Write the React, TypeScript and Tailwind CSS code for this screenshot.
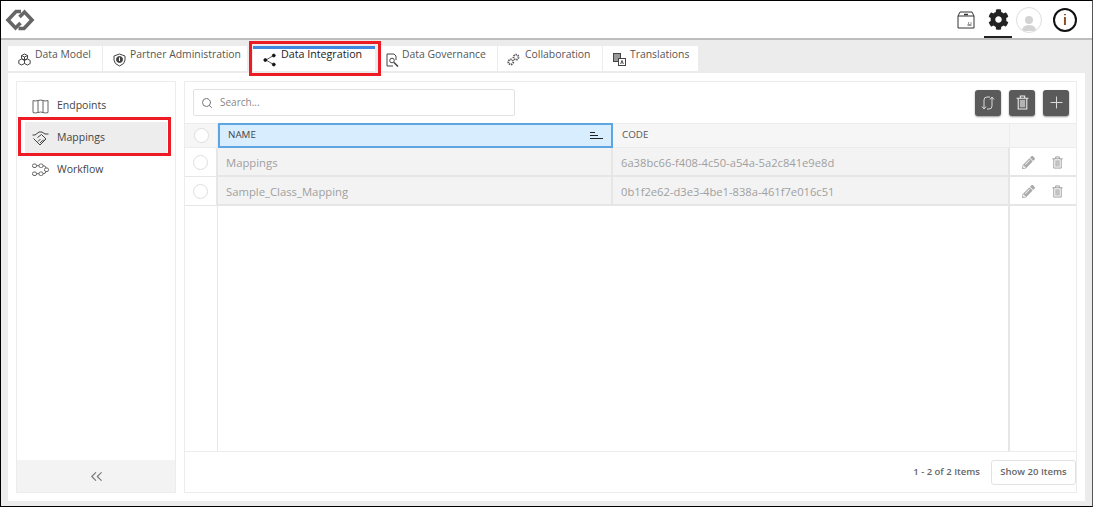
import { ChevronsLeft, Plus, Search } from "lucide-react";
import { FaCog, FaPencilAlt } from "react-icons/fa";
import type { ReactNode } from "react";

function Logo() {
  return (
    <svg width="30" height="22" viewBox="0 0 30 22" fill="none" stroke="#666" strokeWidth="3.6">
      <path d="M16 2.5 H11 L3 11 L10.5 19 L15.5 14" />
      <path d="M13.5 19.5 H19 L27 11 L19.5 3 L14.5 8" />
    </svg>
  );
}

function TrashIcon({ size = 14, color = "#999" }: { size?: number; color?: string }) {
  return (
    <svg width={size} height={size} viewBox="0 0 14 14" fill="none" stroke={color} strokeWidth="1">
      <path d="M1.5 3 H12.5 M5 3 V1 H9 V3" />
      <path d="M3 3 V13 H11 V3" />
      <rect x="4.5" y="4.5" width="5" height="7" fill={color} stroke="none" opacity="0.6" />
    </svg>
  );
}

function RefreshIcon() {
  return (
    <svg width="14" height="16" viewBox="0 0 14 16" fill="none" stroke="#d8d8d8" strokeWidth="1">
      <path d="M3 14 V5 Q3 2 6 2 H9" />
      <path d="M1 11.5 L3 14 L5 11.5" />
      <path d="M11 2 V11 Q11 14 8 14 H6" />
      <path d="M9 4.5 L11 2 L13 4.5" />
    </svg>
  );
}

function ModelIcon() {
  return (
    <svg width="13" height="13" viewBox="0 0 13 13" fill="none" stroke="#444" strokeWidth="1">
      <path d="M6.5 1 L9.5 2.5 V5.5 L6.5 7 L3.5 5.5 V2.5 Z" />
      <path d="M3.5 2.5 L6.5 4 L9.5 2.5 M6.5 4 V7" />
      <path d="M3.5 6 L6.5 7.5 V10.5 L3.5 12 L0.8 10.5 V7.5 Z" />
      <path d="M9.5 6 L12.2 7.5 V10.5 L9.5 12 L6.5 10.5 V7.5 Z" />
    </svg>
  );
}

function ShieldIcon() {
  return (
    <svg width="13" height="14" viewBox="0 0 13 14" fill="none" stroke="#444" strokeWidth="1">
      <path d="M6.5 1 L12 3 V7 Q12 11 6.5 13 Q1 11 1 7 V3 Z" />
      <circle cx="6.5" cy="6.5" r="3" fill="#444" />
      <path d="M6.5 4.5 V8" stroke="#fff" />
    </svg>
  );
}

function ShareIcon() {
  return (
    <svg width="14" height="14" viewBox="0 0 14 14" fill="#111" stroke="#111" strokeWidth="0.7">
      <path d="M3 7 L10.5 2.5 M3 7 L10.5 11.5" fill="none" />
      <circle cx="2.3" cy="7" r="1.5" />
      <circle cx="10.8" cy="2.5" r="1.5" />
      <circle cx="10.8" cy="11.5" r="1.5" />
    </svg>
  );
}

function GovernanceIcon() {
  return (
    <svg width="13" height="14" viewBox="0 0 13 14" fill="none" stroke="#444" strokeWidth="1">
      <path d="M8 1 H1 V13 H7 M10 7 V3 L8 1" />
      <circle cx="6" cy="7.5" r="2.3" />
      <path d="M8 9.5 L12 13.5" strokeWidth="1.6" />
    </svg>
  );
}

function GearsIcon() {
  return (
    <svg width="13" height="13" viewBox="0 0 13 13" fill="none" stroke="#555" strokeWidth="1.8" strokeDasharray="1.4 0.8">
      <circle cx="9" cy="4.2" r="2.5" />
      <circle cx="3.8" cy="9" r="2.5" />
    </svg>
  );
}

function TranslateIcon() {
  return (
    <svg width="13" height="13" viewBox="0 0 13 13" fill="none" stroke="#444" strokeWidth="1">
      <rect x="0.5" y="0.5" width="7" height="8" fill="#999" />
      <rect x="5.5" y="5.5" width="7" height="7" fill="#fff" />
      <path d="M7.7 11 L9 7.5 L10.3 11" />
    </svg>
  );
}

function MapIcon() {
  return (
    <svg width="17" height="15" viewBox="0 0 17 15" fill="none" stroke="#666" strokeWidth="1">
      <path d="M1 1.5 Q3 2.5 6 1.5 Q8.5 0.5 11 1.5 Q13.5 2.5 16 1.5 V13.5 Q13.5 14.5 11 13.5 Q8.5 12.5 6 13.5 Q3 14.5 1 13.5 Z" />
      <path d="M6 1.5 V13.5 M11 1.5 V13.5" />
    </svg>
  );
}

function HandshakeIcon() {
  return (
    <svg width="17" height="15" viewBox="0 0 17 15" fill="none" stroke="#444" strokeWidth="1">
      <path d="M0.5 4 H3 L7 1 H10 L13 3 H16.5" />
      <path d="M1.5 7.5 L8 14 L14 8 L9.5 3.5 L5.5 6.5" />
      <path d="M6 10.5 L8.5 8 M8 12 L10.5 9.5 M10 10.5 L12 8.5" />
    </svg>
  );
}

function FlowIcon() {
  return (
    <svg width="17" height="14" viewBox="0 0 17 14" fill="none" stroke="#666" strokeWidth="1">
      <rect x="0.5" y="1" width="4" height="3.5" rx="1.5" />
      <rect x="0.5" y="9" width="4" height="3.5" rx="1.5" />
      <rect x="7" y="1" width="4" height="3.5" rx="1.5" />
      <rect x="7" y="9" width="4" height="3.5" rx="1.5" />
      <rect x="12.5" y="5" width="4" height="3.5" rx="1.5" />
      <path d="M4.5 2.7 H7 M4.5 10.7 H7 M11 2.7 Q14 2.7 14 5 M11 10.7 Q14 10.7 14 8.5" />
    </svg>
  );
}

function BoxIcon() {
  return (
    <svg width="18" height="18" viewBox="0 0 18 18" fill="none" stroke="#333" strokeWidth="1">
      <path d="M1 5 L3 1 H15 L17 5 V17 H1 Z" />
      <path d="M1 5 H17" />
      <path d="M7 3.5 H11" strokeWidth="1.5" />
      <path d="M10.5 14 H14.5 M11 12 H12 M13.5 12 H14.5" />
    </svg>
  );
}

type Tab = { label: string; icon: ReactNode; active?: boolean; box: string; pad: string; gap: string };

const tabs: Tab[] = [
  { label: "Data Model", icon: <ModelIcon />, box: "w-[95px]", pad: "pl-[10px]", gap: "ml-[4px]" },
  { label: "Partner Administration", icon: <ShieldIcon />, box: "w-[145px]", pad: "pl-[10px]", gap: "ml-[4px]" },
  { label: "Data Integration", icon: <ShareIcon />, active: true, box: "w-[122px] mx-[5px]", pad: "pl-[10px]", gap: "ml-[4px]" },
  { label: "Data Governance", icon: <GovernanceIcon />, box: "w-[118px]", pad: "pl-[6px]", gap: "ml-[3px]" },
  { label: "Collaboration", icon: <GearsIcon />, box: "w-[105px]", pad: "pl-[9px]", gap: "ml-[5px]" },
  { label: "Translations", icon: <TranslateIcon />, box: "w-[96px]", pad: "pl-[10px]", gap: "ml-[4px]" },
];

const rows = [
  { name: "Mappings", code: "6a38bc66-f408-4c50-a54a-5a2c841e9e8d" },
  { name: "Sample_Class_Mapping", code: "0b1f2e62-d3e3-4be1-838a-461f7e016c51" },
];

function Circle() {
  return <span className="w-[15px] h-[15px] rounded-full border border-[#dedede] bg-white" />;
}

function App() {
  return (
    <div className="relative w-[1093px] h-[507px] overflow-hidden bg-[#ececec] border border-black border-r-[#555] font-['Open_Sans',sans-serif] box-border">
      {/* top bar */}
      <div className="h-[37px] bg-white border-b-2 border-[#bdbdbd] box-content flex items-center pl-[4px] pr-[15px]">
        <Logo />
        <div className="ml-auto flex items-center">
          <BoxIcon />
          <div className="relative ml-[9px] w-[28px] h-[37px] flex items-center justify-center">
            <FaCog size={21} color="#222" />
            <span className="absolute left-0 right-0 bottom-0 h-[2px] bg-[#222]" />
          </div>
          <div className="ml-[4px] w-[26px] h-[26px] rounded-full border border-[#ddd] flex items-end justify-center overflow-hidden">
            <svg width="16" height="18" viewBox="0 0 16 18" fill="#d4d4d4">
              <circle cx="8" cy="6" r="4" />
              <path d="M1 17 Q1 11 8 11 Q15 11 15 17 Z" />
            </svg>
          </div>
          <div className="ml-[11px] w-[24px] h-[24px] rounded-full border-2 border-[#111] flex items-center justify-center text-[15px] leading-none text-[#111] font-['Liberation_Sans',sans-serif]">
            i
          </div>
        </div>
      </div>

      {/* tabs */}
      <div className="flex pl-[7px] pt-[6px] h-[33px]">
        {tabs.map((t) => (
          <div
            key={t.label}
            className={`${t.box} h-[25px] shrink-0 flex bg-white ${
              t.active ? "border-t-[3px] border-t-[#3f86e0]" : "border-r border-[#ececec]"
            }`}
          >
            <div className={`flex w-full ${t.pad} ${t.active ? "pt-0" : "pt-[1px]"}`}>
              <span className={t.active ? "mt-[4px]" : "mt-[6px]"}>{t.icon}</span>
              <span
                className={`${t.gap} whitespace-nowrap ${
                  t.active ? "text-[10.7px] text-[#222] leading-[10px]" : "text-[10.4px] text-[#555] leading-[14px]"
                }`}
              >
                {t.label}
              </span>
            </div>
          </div>
        ))}
      </div>

      {/* content */}
      <div className="mx-[7px] h-[428px] bg-white flex gap-[8px] px-[8px] pt-[8px] pb-[8px]">
        {/* sidebar */}
        <div className="w-[160px] border border-[#ececec] flex flex-col">
          <div className="flex-1 pt-[8px] pl-[8px]">
            <div className="h-[32px] flex items-center pl-[7px] gap-[8px] text-[10.5px] text-[#444]">
              <MapIcon />
              Endpoints
            </div>
            <div className="h-[32px] w-[142px] flex items-center pl-[7px] gap-[8px] text-[10.5px] text-[#444] bg-[#ededed]">
              <HandshakeIcon />
              Mappings
            </div>
            <div className="h-[32px] flex items-center pl-[7px] gap-[8px] text-[10.5px] text-[#444]">
              <FlowIcon />
              Workflow
            </div>
          </div>
          <div className="h-[32px] bg-[#f3f3f3] flex items-center justify-center">
            <ChevronsLeft size={19} color="#777" strokeWidth={1.4} />
          </div>
        </div>

        {/* main panel */}
        <div className="flex-1 border border-[#ececec] flex flex-col min-w-0">
          <div className="h-[41px] flex items-center pl-[8px] pr-[7px]">
            <div className="w-[322px] h-[27px] border border-[#e2e2e2] rounded-[2px] flex items-center pl-[7px] gap-[7px]">
              <Search size={12} color="#777" strokeWidth={2} />
              <span className="text-[10px] text-[#888]">Search...</span>
            </div>
            <div className="ml-auto flex gap-[8px]">
              <div className="w-[26px] h-[26px] rounded-[3px] bg-[#5a5a5a] shadow-[0_1px_2px_#999] flex items-center justify-center">
                <RefreshIcon />
              </div>
              <div className="w-[26px] h-[26px] rounded-[3px] bg-[#5a5a5a] shadow-[0_1px_2px_#999] flex items-center justify-center">
                <TrashIcon size={15} color="#eee" />
              </div>
              <div className="w-[26px] h-[26px] rounded-[3px] bg-[#5a5a5a] shadow-[0_1px_2px_#999] flex items-center justify-center">
                <Plus size={19} color="#ddd" strokeWidth={1.25} />
              </div>
            </div>
          </div>

          <div className="flex-1 relative grid grid-cols-[33px_395px_397px_1fr] grid-rows-[25px_29px_29px_1fr] border-b border-[#ececec] min-h-0">
            <div className="bg-[#f6f6f6] flex items-center justify-center border-y border-r border-[#ececec]">
              <Circle />
            </div>
            <div className="bg-[#d8eefe] border-2 border-[#5da6e2] flex items-center justify-between pl-[8px] pr-[8px] text-[9.8px] font-medium text-[#444]">
              NAME
              <svg width="13" height="9" viewBox="0 0 13 9" stroke="#222" strokeWidth="1">
                <path d="M0 1.5 H5 M0 4.5 H8 M0 7.5 H13" />
              </svg>
            </div>
            <div className="bg-[#f6f6f6] flex items-center pl-[9px] text-[9.8px] font-medium text-[#555] border-y border-r border-[#ececec]">
              CODE
            </div>
            <div className="bg-[#f6f6f6] border-y border-[#ececec]" />

            {rows.map((r) => [
              <div key={r.name + "c"} className="flex items-center justify-center border-b border-r-2 border-[#e6e6e6]">
                <Circle />
              </div>,
              <div key={r.name + "n"} className="bg-[#f3f3f3] flex items-center pl-[8px] pt-[4px] text-[11.3px] text-[#a0a0a0] border-b-2 border-r-2 border-[#e6e6e6]">
                {r.name}
              </div>,
              <div key={r.name + "k"} className="bg-[#f3f3f3] flex items-center pl-[8px] pt-[4px] text-[11.2px] text-[#a0a0a0] border-b-2 border-r-2 border-[#e6e6e6]">
                {r.code}
              </div>,
              <div key={r.name + "a"} className="flex items-center pl-[12px] gap-[16px] border-b-2 border-[#e6e6e6] pt-[1px]">
                <FaPencilAlt size={13} color="#aaa" />
                <TrashIcon size={13} color="#999" />
              </div>,
            ])}

            <div className="border-r border-[#e6e6e6]" />
            <div className="col-span-2 border-r-2 border-[#e6e6e6]" />
            <div />
          </div>

          <div className="h-[40px] flex items-center justify-end text-[9.5px] text-[#666]">
            <span className="font-semibold mr-[11px]">1 - 2 of 2 Items</span>
            <div className="w-[85px] h-[25px] border border-[#e2e2e2] rounded-[3px] flex items-center justify-center font-semibold bg-white">
              Show 20 Items
            </div>
          </div>
        </div>
      </div>

      {/* red annotation boxes */}
      <div className="absolute left-[248px] top-[40px] w-[132px] h-[35px] border-[3px] border-[#ed1c24]" />
      <div className="absolute left-[17px] top-[116px] w-[153px] h-[39px] border-[3px] border-[#ed1c24]" />
    </div>
  );
}

export default App;
